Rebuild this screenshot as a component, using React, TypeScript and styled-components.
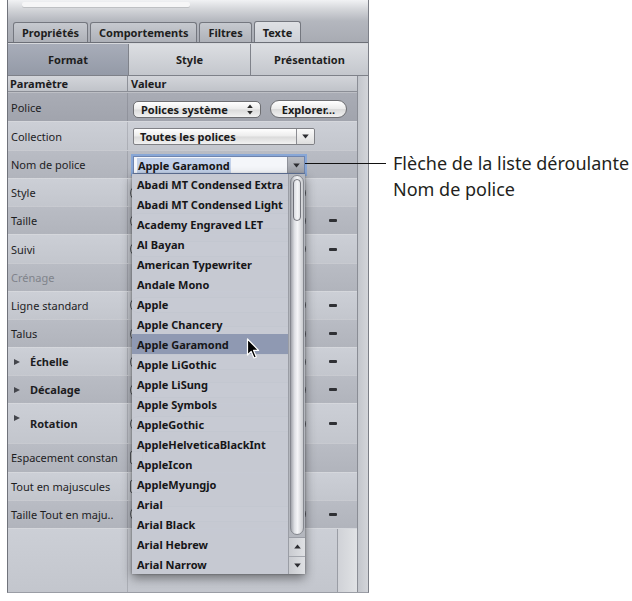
import React from "react";
import styled, { createGlobalStyle, css } from "styled-components";

const Global = createGlobalStyle`
  html, body { margin: 0; padding: 0; background: #ffffff; }
  body { font-family: "Noto Sans", "DejaVu Sans", sans-serif; color: #1d1d1f; }
  * { box-sizing: border-box; }
`;

type Tone = "strong" | "dark" | "light";
const toneBg: Record<Tone, string> = {
  strong: "linear-gradient(#a9acb5, #a1a4ad)",
  dark: "linear-gradient(#b9bcc4, #b1b4bc)",
  light: "linear-gradient(#cccfd6, #c3c6cd)",
};

const Page = styled.div`
  display: flex;
  align-items: flex-start;
  width: 632px;
  height: 601px;
  padding-left: 7px;
  overflow: hidden;
`;

const Panel = styled.div`
  width: 362px;
  height: 593px;
  display: flex;
  flex-direction: column;
  border-left: 1px solid #70737b;
  border-right: 1px solid #7c7f87;
  border-bottom: 1px solid #9a9da5;
  background: #b6b9c0;
  flex-shrink: 0;
`;

const TopStrip = styled.div`
  height: 21px;
  padding: 2px 0 0 14px;
  background: linear-gradient(#f1f2f4, #d3d5d9 45%, #b4b7be);
`;

const LightBar = styled.div`
  width: 168px;
  height: 5px;
  border-radius: 2px;
  background: #f6f6f7;
  box-shadow: 0 1px 0 rgba(0, 0, 0, 0.12);
`;

const TabBar = styled.div`
  height: 22px;
  display: flex;
  align-items: flex-end;
  gap: 2px;
  padding-left: 5px;
  background: linear-gradient(#b4b7be, #a8abb3);
  border-bottom: 1px solid #6c6f77;
`;

const Tab = styled.div<{ $active?: boolean }>`
  height: ${(p) => (p.$active ? 21 : 20)}px;
  padding: 0 8px;
  display: flex;
  align-items: center;
  border: 1px solid #74777f;
  border-bottom: none;
  border-radius: 3px 3px 0 0;
  font-size: 11px;
  font-weight: 700;
  color: #1e1e20;
  background: ${(p) =>
    p.$active
      ? "linear-gradient(#dfe1e5, #cdd0d6)"
      : "linear-gradient(#c6c9cf, #aeb1b8)"};
`;

const SubTabBar = styled.div`
  height: 33px;
  display: grid;
  grid-template-columns: 121px 122px 1fr;
  border-top: 1px solid #d6d8dc;
  border-bottom: 1px solid #7e8189;
`;

const SubTab = styled.div<{ $selected?: boolean; $last?: boolean }>`
  display: flex;
  align-items: center;
  justify-content: center;
  font-size: 11px;
  font-weight: 700;
  color: #1e1e20;
  border-right: ${(p) => (p.$last ? "none" : "1px solid #7f828a")};
  background: ${(p) =>
    p.$selected
      ? "linear-gradient(#a8adb9, #949aa7)"
      : "linear-gradient(#dcdee2, #c4c7cd)"};
`;

const Table = styled.div`
  flex: 1;
  display: flex;
  min-height: 0;
`;

const RowsColumn = styled.div`
  flex: 1;
  display: flex;
  flex-direction: column;
`;

const RightStrip = styled.div`
  width: 11px;
  border-left: 1px solid #8a8d95;
  background: linear-gradient(90deg, #c3c6cc, #d3d5da);
`;

const HeaderRow = styled.div`
  height: 16px;
  display: grid;
  grid-template-columns: 120px 1fr;
  background: linear-gradient(#d3d5da, #c0c3c9);
  border-bottom: 1px solid #8b8e96;
  font-size: 11px;
  font-weight: 700;
  color: #1c1c1e;
`;

const HeaderCell = styled.div<{ $pad: number; $divider?: boolean }>`
  display: flex;
  align-items: center;
  padding-left: ${(p) => p.$pad}px;
  border-right: ${(p) => (p.$divider ? "1px solid #8e9199" : "none")};
`;

const RowBox = styled.div<{ $tone: Tone; $h: number; $grow?: boolean }>`
  display: grid;
  grid-template-columns: 120px 1fr;
  height: ${(p) => p.$h}px;
  flex: ${(p) => (p.$grow ? "1 1 auto" : "0 0 auto")};
  background: ${(p) => toneBg[p.$tone]};
  border-top: 1px solid rgba(255, 255, 255, 0.3);
`;

const LabelCell = styled.div<{ $disabled?: boolean }>`
  display: flex;
  align-items: center;
  padding: 0 10px 0 3px;
  border-right: 1px solid rgba(60, 63, 72, 0.18);
  font-size: 11px;
  color: ${(p) => (p.$disabled ? "#80838b" : "#1d1d1f")};
  white-space: nowrap;
  overflow: hidden;
`;

const Disclosure = styled.span<{ $raised?: boolean }>`
  display: flex;
  align-items: center;
  gap: 10px;
  padding-left: 3px;
  font-weight: 700;
  &::before {
    content: "";
    width: 0;
    height: 0;
    border-left: 6px solid #44464c;
    border-top: 3.5px solid transparent;
    border-bottom: 3.5px solid transparent;
    ${(p) =>
      p.$raised &&
      css`
        transform: translateY(-6px);
      `}
  }
`;

const ValueCell = styled.div<{ $end?: boolean }>`
  display: flex;
  align-items: center;
  justify-content: ${(p) => (p.$end ? "flex-end" : "flex-start")};
  position: relative;
  min-width: 0;
`;

const ControlArea = styled.div<{ $pad: number }>`
  flex: 1;
  display: flex;
  align-items: center;
  gap: 9px;
  padding-left: ${(p) => p.$pad}px;
  min-width: 0;
  height: 100%;
`;

const ResetCol = styled.div`
  width: 50px;
  display: flex;
  justify-content: center;
  padding-left: 2px;
`;

const Dash = styled.span`
  width: 8px;
  height: 3px;
  border-radius: 1px;
  background: #2f3034;
`;

const buttonFace = css`
  border: 1px solid #6e6f73;
  background: linear-gradient(#ffffff, #ececec 48%, #dadada 52%, #f2f2f2);
  font-size: 11px;
  font-weight: 700;
  color: #1a1a1a;
  display: flex;
  align-items: center;
`;

const PopupButton = styled.div`
  ${buttonFace};
  width: 128px;
  height: 17px;
  margin-top: 4px;
  border-radius: 5px;
  padding: 0 7px 0 7px;
  justify-content: space-between;
`;

const PillButton = styled.div`
  ${buttonFace};
  width: 77px;
  height: 18px;
  margin-top: 4px;
  border-radius: 9px;
  justify-content: center;
`;

const SelectBox = styled.div`
  ${buttonFace};
  width: 182px;
  height: 17px;
  border-radius: 2px;
  border-color: #808186;
`;

const SelectText = styled.span`
  flex: 1;
  padding-left: 6px;
`;

const SelectArrow = styled.span`
  width: 18px;
  height: 100%;
  display: flex;
  align-items: center;
  justify-content: center;
  border-left: 1px solid #8c8d92;
  border-radius: 0 2px 2px 0;
  background: linear-gradient(#fafafa, #dedede);
`;

const ComboWrap = styled.div`
  position: relative;
  margin-top: 1px;
`;

const ComboBox = styled.div`
  width: 172px;
  height: 18px;
  display: flex;
  border: 1px solid #6f84ad;
  box-shadow: 0 0 0 2px rgba(120, 160, 222, 0.75);
  background: #f4f6fa;
  font-size: 11px;
  font-weight: 700;
  color: #161616;
`;

const ComboText = styled.span`
  flex: 1;
  display: flex;
  align-items: center;
  padding-left: 3px;
`;

const Selection = styled.span`
  background: #c2d1ea;
  padding: 0 1px;
`;

const ComboArrow = styled.span`
  width: 17px;
  display: flex;
  align-items: center;
  justify-content: center;
  border-left: 1px solid #8e919a;
  background: linear-gradient(#b9bcc3, #9ea1a9);
`;

const CalloutLine = styled.span`
  position: absolute;
  left: 100%;
  top: 7px;
  width: 81px;
  height: 1px;
  background: #111111;
  z-index: 20;
`;

const Menu = styled.div`
  position: absolute;
  top: 100%;
  left: -1px;
  width: 173px;
  height: 400px;
  display: flex;
  background: rgba(198, 201, 210, 0.98);
  box-shadow: 0 4px 10px rgba(0, 0, 0, 0.45), 0 0 2px rgba(0, 0, 0, 0.35);
  z-index: 10;
`;

const MenuList = styled.div`
  flex: 1;
  display: flex;
  flex-direction: column;
`;

const MenuItem = styled.div<{ $active?: boolean }>`
  position: relative;
  height: 20px;
  padding-left: 5px;
  display: flex;
  align-items: center;
  font-size: 11px;
  font-weight: 700;
  color: #161618;
  white-space: nowrap;
  background: ${(p) => (p.$active ? "#8f99b2" : "transparent")};
`;

const Cursor = styled.svg`
  position: absolute;
  left: 114px;
  top: 4px;
`;

const MenuScroll = styled.div`
  width: 17px;
  display: flex;
  flex-direction: column;
  background: #b4b7be;
  border-left: 1px solid #9a9da5;
`;

const Thumb = styled.div`
  position: relative;
  flex: 1;
  margin: 1px 1px 2px 1px;
  border: 1px solid #85888f;
  border-radius: 8px;
  background: linear-gradient(90deg, #a2a5ac 0%, #dfe1e5 30%, #f4f5f7 55%, #c8cace 100%);
  &::before {
    content: "";
    position: absolute;
    top: 3px;
    left: 2px;
    right: 2px;
    height: 40px;
    border: 1.5px solid rgba(60, 62, 70, 0.65);
    border-radius: 6px;
  }
`;

const ArrowBox = styled.div`
  height: 37px;
  display: flex;
  flex-direction: column;
  border-top: 1px solid #9a9da5;
  background: linear-gradient(90deg, #c9cbd0, #dfe1e4);
`;

const ArrowHalf = styled.div<{ $top?: boolean }>`
  flex: 1;
  display: flex;
  align-items: center;
  justify-content: center;
  border-bottom: ${(p) => (p.$top ? "1px solid #a3a6ad" : "none")};
`;

const HiddenField = styled.div<{ $check?: boolean }>`
  margin-left: 2px;
  width: ${(p) => (p.$check ? 13 : 176)}px;
  height: ${(p) => (p.$check ? 13 : 16)}px;
  border: 1px solid #55585f;
  border-radius: ${(p) => (p.$check ? 2 : 8)}px;
  background: #dcdee2;
`;

const FillerTrack = styled.div`
  width: 20px;
  height: 100%;
  border-left: 1px solid #9a9da5;
  background: linear-gradient(90deg, #d0d2d7, #e0e2e5);
`;

const Annotation = styled.div`
  margin-left: 24px;
  margin-top: 150px;
  font-family: "Noto Sans", "Open Sans", sans-serif;
  font-size: 18px;
  line-height: 26px;
  color: #231f20;
  white-space: nowrap;
`;

const Tri = ({ up }: { up?: boolean }) => (
  <svg width="7" height="5" viewBox="0 0 7 5">
    <path d={up ? "M3.5 0.5 L6.8 4.5 H0.2 Z" : "M0.2 0.5 H6.8 L3.5 4.5 Z"} fill="#2c2d31" />
  </svg>
);

const UpDown = () => (
  <svg width="6" height="11" viewBox="0 0 6 11">
    <path d="M3 0.5 L5.8 4 H0.2 Z M3 10.5 L5.8 7 H0.2 Z" fill="#2a2a2a" />
  </svg>
);

const fonts = [
  "Abadi MT Condensed Extra",
  "Abadi MT Condensed Light",
  "Academy Engraved LET",
  "Al Bayan",
  "American Typewriter",
  "Andale Mono",
  "Apple",
  "Apple Chancery",
  "Apple Garamond",
  "Apple LiGothic",
  "Apple LiSung",
  "Apple Symbols",
  "AppleGothic",
  "AppleHelveticaBlackInt",
  "AppleIcon",
  "AppleMyungjo",
  "Arial",
  "Arial Black",
  "Arial Hebrew",
  "Arial Narrow",
];

type Kind = "police" | "collection" | "combo" | "field" | "check" | "none";
type Row = {
  label: string;
  tone: Tone;
  kind: Kind;
  h: number;
  reset?: boolean;
  disabled?: boolean;
  disclosure?: "flat" | "raised";
};

const R = 28.17;
const rows: Row[] = [
  { label: "Police", tone: "strong", kind: "police", h: 29 },
  { label: "Collection", tone: "light", kind: "collection", h: 29 },
  { label: "Nom de police", tone: "dark", kind: "combo", h: R },
  { label: "Style", tone: "light", kind: "field", h: R },
  { label: "Taille", tone: "dark", kind: "field", h: R, reset: true },
  { label: "Suivi", tone: "light", kind: "field", h: R, reset: true },
  { label: "Crénage", tone: "dark", kind: "none", h: R, disabled: true },
  { label: "Ligne standard", tone: "light", kind: "field", h: R, reset: true },
  { label: "Talus", tone: "dark", kind: "field", h: R, reset: true },
  { label: "Échelle", tone: "light", kind: "field", h: R, reset: true, disclosure: "flat" },
  { label: "Décalage", tone: "dark", kind: "field", h: R, reset: true, disclosure: "flat" },
  { label: "Rotation", tone: "light", kind: "field", h: 40, reset: true, disclosure: "raised" },
  { label: "Espacement constan", tone: "dark", kind: "check", h: R },
  { label: "Tout en majuscules", tone: "light", kind: "check", h: R },
  { label: "Taille Tout en maju..", tone: "dark", kind: "field", h: R, reset: true },
];

const FontMenu = () => (
  <Menu>
    <MenuList>
      {fonts.map((f) => (
        <MenuItem key={f} $active={f === "Apple Garamond"}>
          {f}
          {f === "Apple Garamond" && (
            <Cursor width="14" height="22" viewBox="0 0 14 22">
              <path
                d="M1.5 1 L1.5 17 L5.2 13.4 L8 20 L10.4 19 L7.6 12.4 L12.6 12.4 Z"
                fill="#000"
                stroke="#fff"
                strokeWidth="1.2"
                strokeLinejoin="round"
              />
            </Cursor>
          )}
        </MenuItem>
      ))}
    </MenuList>
    <MenuScroll>
      <Thumb />
      <ArrowBox>
        <ArrowHalf $top>
          <Tri up />
        </ArrowHalf>
        <ArrowHalf>
          <Tri />
        </ArrowHalf>
      </ArrowBox>
    </MenuScroll>
  </Menu>
);

const Control = ({ kind }: { kind: Kind }) => {
  switch (kind) {
    case "police":
      return (
        <>
          <PopupButton>
            <span>Polices système</span>
            <UpDown />
          </PopupButton>
          <PillButton>Explorer…</PillButton>
        </>
      );
    case "collection":
      return (
        <SelectBox>
          <SelectText>Toutes les polices</SelectText>
          <SelectArrow>
            <Tri />
          </SelectArrow>
        </SelectBox>
      );
    case "combo":
      return (
        <ComboWrap>
          <ComboBox>
            <ComboText>
              <Selection>Apple Garamond</Selection>
            </ComboText>
            <ComboArrow>
              <Tri />
            </ComboArrow>
          </ComboBox>
          <CalloutLine />
          <FontMenu />
        </ComboWrap>
      );
    case "field":
      return <HiddenField />;
    case "check":
      return <HiddenField $check />;
    default:
      return null;
  }
};

export default function App() {
  return (
    <>
      <Global />
      <Page>
        <Panel>
          <TopStrip>
            <LightBar />
          </TopStrip>
          <TabBar>
            <Tab>Propriétés</Tab>
            <Tab>Comportements</Tab>
            <Tab>Filtres</Tab>
            <Tab $active>Texte</Tab>
          </TabBar>
          <SubTabBar>
            <SubTab $selected>Format</SubTab>
            <SubTab>Style</SubTab>
            <SubTab $last>Présentation</SubTab>
          </SubTabBar>
          <Table>
            <RowsColumn>
              <HeaderRow>
                <HeaderCell $pad={2} $divider>
                  Paramètre
                </HeaderCell>
                <HeaderCell $pad={3}>Valeur</HeaderCell>
              </HeaderRow>
              {rows.map((r) => (
                <RowBox key={r.label} $tone={r.tone} $h={r.h}>
                  <LabelCell $disabled={r.disabled}>
                    {r.disclosure ? (
                      <Disclosure $raised={r.disclosure === "raised"}>{r.label}</Disclosure>
                    ) : (
                      r.label
                    )}
                  </LabelCell>
                  <ValueCell>
                    <ControlArea $pad={r.kind === "field" || r.kind === "check" ? 0 : 5}>
                      <Control kind={r.kind} />
                    </ControlArea>
                    {r.reset && (
                      <ResetCol>
                        <Dash />
                      </ResetCol>
                    )}
                  </ValueCell>
                </RowBox>
              ))}
              <RowBox $tone="light" $h={64} $grow>
                <LabelCell />
                <ValueCell $end>
                  <FillerTrack />
                </ValueCell>
              </RowBox>
            </RowsColumn>
            <RightStrip />
          </Table>
        </Panel>
        <Annotation>
          Flèche de la liste déroulante
          <br />
          Nom de police
        </Annotation>
      </Page>
    </>
  );
}
